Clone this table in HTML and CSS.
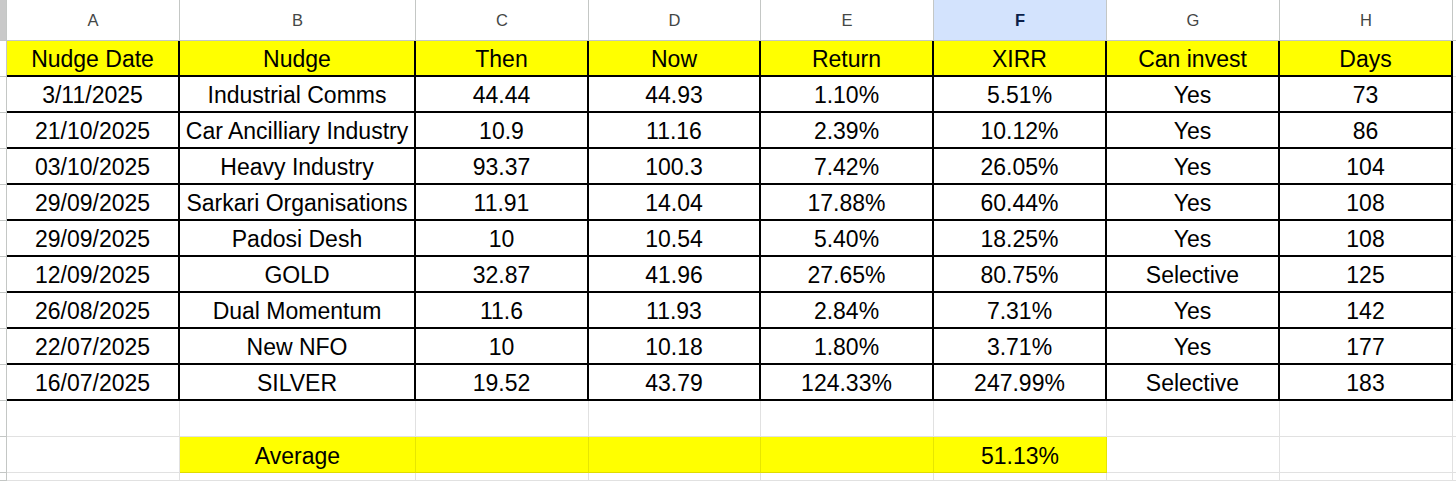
FILE: index.html
```html
<!DOCTYPE html>
<html lang="en">
<head>
<meta charset="utf-8">
<title>Nudge Returns</title>
<link rel="stylesheet" href="styles.css">
</head>
<body>
<div class="sheet">
  <!-- column letters -->
  <div class="ch corner"></div>
  <div class="ch">A</div>
  <div class="ch">B</div>
  <div class="ch">C</div>
  <div class="ch">D</div>
  <div class="ch">E</div>
  <div class="ch sel">F</div>
  <div class="ch">G</div>
  <div class="ch">H</div>
  <div class="ch rest"></div>

  <!-- header row -->
  <div class="rh"></div>
  <div class="c hd">Nudge Date</div>
  <div class="c hd">Nudge</div>
  <div class="c hd">Then</div>
  <div class="c hd">Now</div>
  <div class="c hd">Return</div>
  <div class="c hd">XIRR</div>
  <div class="c hd">Can invest</div>
  <div class="c hd">Days</div>
  <div class="g rest"></div>

  <div class="rh"></div>
  <div class="c">3/11/2025</div><div class="c">Industrial Comms</div><div class="c">44.44</div><div class="c">44.93</div><div class="c">1.10%</div><div class="c">5.51%</div><div class="c">Yes</div><div class="c">73</div>
  <div class="g rest"></div>

  <div class="rh"></div>
  <div class="c">21/10/2025</div><div class="c">Car Ancilliary Industry</div><div class="c">10.9</div><div class="c">11.16</div><div class="c">2.39%</div><div class="c">10.12%</div><div class="c">Yes</div><div class="c">86</div>
  <div class="g rest"></div>

  <div class="rh"></div>
  <div class="c">03/10/2025</div><div class="c">Heavy Industry</div><div class="c">93.37</div><div class="c">100.3</div><div class="c">7.42%</div><div class="c">26.05%</div><div class="c">Yes</div><div class="c">104</div>
  <div class="g rest"></div>

  <div class="rh"></div>
  <div class="c">29/09/2025</div><div class="c">Sarkari Organisations</div><div class="c">11.91</div><div class="c">14.04</div><div class="c">17.88%</div><div class="c">60.44%</div><div class="c">Yes</div><div class="c">108</div>
  <div class="g rest"></div>

  <div class="rh"></div>
  <div class="c">29/09/2025</div><div class="c">Padosi Desh</div><div class="c">10</div><div class="c">10.54</div><div class="c">5.40%</div><div class="c">18.25%</div><div class="c">Yes</div><div class="c">108</div>
  <div class="g rest"></div>

  <div class="rh"></div>
  <div class="c">12/09/2025</div><div class="c">GOLD</div><div class="c">32.87</div><div class="c">41.96</div><div class="c">27.65%</div><div class="c">80.75%</div><div class="c">Selective</div><div class="c">125</div>
  <div class="g rest"></div>

  <div class="rh"></div>
  <div class="c">26/08/2025</div><div class="c">Dual Momentum</div><div class="c">11.6</div><div class="c">11.93</div><div class="c">2.84%</div><div class="c">7.31%</div><div class="c">Yes</div><div class="c">142</div>
  <div class="g rest"></div>

  <div class="rh"></div>
  <div class="c">22/07/2025</div><div class="c">New NFO</div><div class="c">10</div><div class="c">10.18</div><div class="c">1.80%</div><div class="c">3.71%</div><div class="c">Yes</div><div class="c">177</div>
  <div class="g rest"></div>

  <div class="rh"></div>
  <div class="c">16/07/2025</div><div class="c">SILVER</div><div class="c">19.52</div><div class="c">43.79</div><div class="c">124.33%</div><div class="c">247.99%</div><div class="c">Selective</div><div class="c">183</div>
  <div class="g rest"></div>

  <!-- empty row -->
  <div class="rh"></div>
  <div class="g"></div><div class="g"></div><div class="g"></div><div class="g"></div><div class="g"></div><div class="g"></div><div class="g"></div><div class="g"></div>
  <div class="g rest"></div>

  <!-- average row -->
  <div class="rh"></div>
  <div class="g"></div>
  <div class="g y">Average</div>
  <div class="g y"></div>
  <div class="g y"></div>
  <div class="g y"></div>
  <div class="g y">51.13%</div>
  <div class="g"></div>
  <div class="g"></div>
  <div class="g rest"></div>

  <!-- trailing row -->
  <div class="rh"></div>
  <div class="g"></div><div class="g"></div><div class="g"></div><div class="g"></div><div class="g"></div><div class="g"></div><div class="g"></div><div class="g"></div>
  <div class="g rest"></div>
</div>
</body>
</html>
```

FILE: styles.css
```css
html, body {
  margin: 0;
  padding: 0;
  background: #ffffff;
  overflow: hidden;
}

.sheet {
  display: grid;
  grid-template-columns: 7px 173px 236px 173px 172px 173px 173px 173px 173px 1fr;
  grid-template-rows: 41px repeat(12, 36px) 8px;
  width: 1456px;
  height: 481px;
  overflow: hidden;
  font-family: "Liberation Sans", Arial, sans-serif;
  font-size: 23px;
  color: #000;
}

.sheet > div {
  box-sizing: border-box;
  display: flex;
  align-items: center;
  justify-content: center;
  white-space: nowrap;
  overflow: hidden;
  padding-top: 3px;
}

/* column letter header */
.sheet > .ch {
  font-size: 16.5px;
  color: #444746;
  border-right: 1px solid #c4c7c5;
  border-bottom: 1px solid #c4c7c5;
  padding-top: 0;
}
.ch.corner {
  background: #c9c9c9;
}
.ch.sel {
  background: #d3e3fd;
  color: #0b1f4a;
  font-weight: bold;
}
.ch.rest {
  border-right: none;
}

/* row header stub */
.rh {
  border-right: 1px solid #c4c7c5;
  border-bottom: 1px solid #c4c7c5;
}

/* data table cells */
.c {
  border-right: 2px solid #000;
  border-bottom: 2px solid #000;
}
.c.hd {
  background: #ffff00;
}

/* plain grid cells */
.g {
  border-right: 1px solid #e1e1e1;
  border-bottom: 1px solid #e1e1e1;
}
.g.rest {
  border-right: none;
}
.g.y {
  background: #ffff00;
  border-right-color: #e6e600;
  border-bottom-color: #e0dc00;
}
```
